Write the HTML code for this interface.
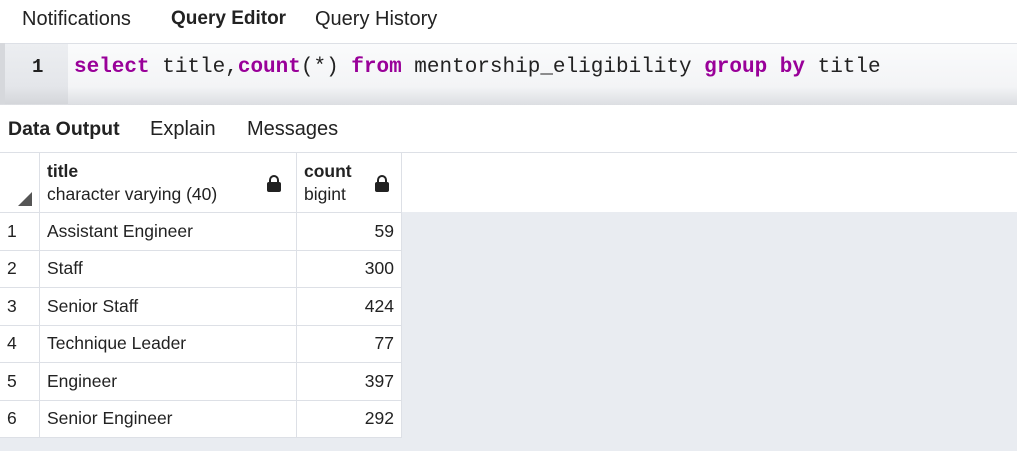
<!DOCTYPE html><html><head><style>
body{margin:0;width:1017px;height:451px;overflow:hidden;background:#fff;font-family:"Liberation Sans",sans-serif;color:#222;position:relative}
.a{position:absolute}
.tab{font-size:20px;top:8px}
.mono{font-family:"Liberation Mono",monospace;font-size:21px}
.kw{color:#990099;font-weight:bold}
table{border-collapse:collapse;position:absolute;left:-1px;top:152px;font-size:17.5px;table-layout:fixed}
td{border:1px solid #dde0e6;height:37.5px;padding:0 7px;box-sizing:border-box}
tr{height:37.5px}
.lock{position:absolute;width:14px;height:10px;background:#222;border-radius:2px}
.lock:before{content:"";position:absolute;left:2px;top:-7px;width:6px;height:7px;border:2px solid #222;border-bottom:none;border-radius:5px 5px 0 0}
</style></head><body>
<div class="a tab" style="left:22px">Notifications</div>
<div class="a tab" style="left:171px;font-weight:bold;font-size:19px">Query Editor</div>
<div class="a tab" style="left:315px">Query History</div>
<div class="a" style="left:0;top:43px;width:1017px;height:61px;background:linear-gradient(#fafbfc,#f3f4f6 70%,#dcdee2);border-top:1px solid #dde0e6"></div>
<div class="a" style="left:0;top:43px;width:5px;height:61px;background:#d6d8dc"></div>
<div class="a" style="left:5px;top:44px;width:63px;height:60px;background:linear-gradient(#eceef1,#e4e6ea 70%,#d4d6da)"></div>
<div class="a mono" style="left:32px;top:56px;font-size:19px;font-weight:bold">1</div>
<div class="a mono" style="left:74px;top:56px;white-space:pre"><span class="kw">select</span> title,<span class="kw">count</span>(*) <span class="kw">from</span> mentorship_eligibility <span class="kw">group by</span> title</div>
<div class="a tab" style="left:8px;top:118px;font-weight:bold;font-size:19.5px">Data Output</div>
<div class="a tab" style="left:150px;top:118px">Explain</div>
<div class="a tab" style="left:247px;top:118px">Messages</div>
<div class="a" style="left:0;top:152px;width:1017px;height:1px;background:#dde0e6"></div>
<div class="a" style="left:401px;top:212px;width:616px;height:239px;background:#e9ecf1"></div>
<div class="a" style="left:0;top:437px;width:1017px;height:14px;background:#e9ecf1"></div>
<table>
<colgroup><col style="width:40px"><col style="width:257px"><col style="width:105px"></colgroup>
<tr style="height:60px"><td style="height:60px;position:relative"><div class="a" style="left:18px;bottom:6px;width:0;height:0;border-left:14px solid transparent;border-bottom:14px solid #555"></div></td>
<td style="height:60px;position:relative;line-height:23px"><b>title</b><br>character varying (40)<div class="lock" style="left:227px;top:29px"></div></td>
<td style="height:60px;position:relative;line-height:23px"><b>count</b><br>bigint<div class="lock" style="left:78px;top:29px"></div></td></tr>
<tr><td>1</td><td>Assistant Engineer</td><td align="right">59</td></tr>
<tr><td>2</td><td>Staff</td><td align="right">300</td></tr>
<tr><td>3</td><td>Senior Staff</td><td align="right">424</td></tr>
<tr><td>4</td><td>Technique Leader</td><td align="right">77</td></tr>
<tr><td>5</td><td>Engineer</td><td align="right">397</td></tr>
<tr><td>6</td><td>Senior Engineer</td><td align="right">292</td></tr>
</table>
</body></html>
